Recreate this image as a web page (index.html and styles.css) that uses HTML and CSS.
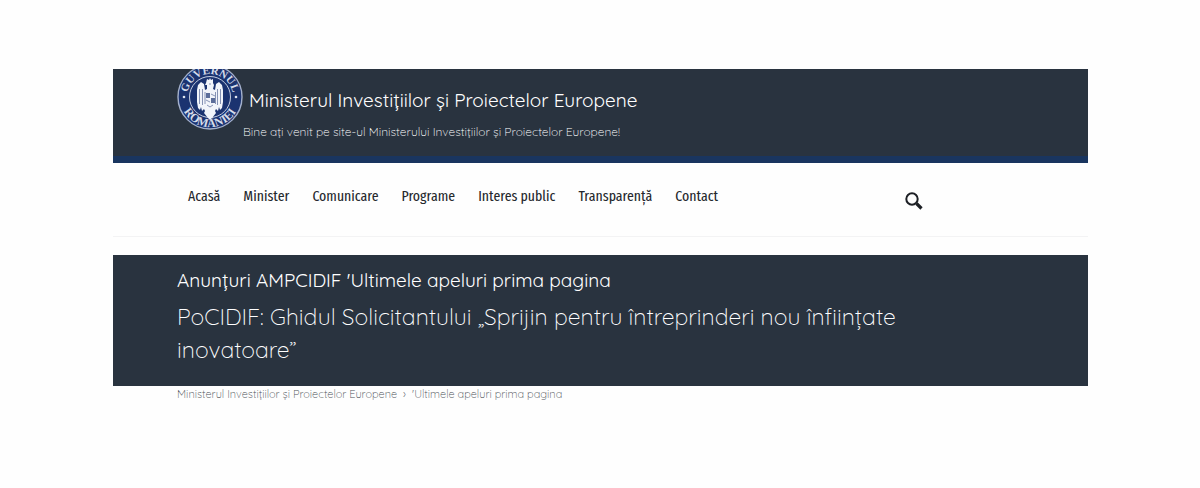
FILE: index.html
```
<!DOCTYPE html>
<html lang="ro">
<head>
    <meta charset="UTF-8">
    <meta name="viewport" content="width=device-width, initial-scale=1.0">
    <title>Ministerul Investițiilor și Proiectelor Europene</title>
    <link rel="stylesheet" href="styles.css">
</head>
<body>
    <header class="site-header">
        <svg class="emblem" viewBox="0 0 66 66" role="img" aria-label="Guvernul României">
            <defs>
                <path id="arc-top" d="M10 33a23 23 0 0 1 46 0"/>
                <path id="arc-bottom" d="M3 33a30 30 0 0 0 60 0"/>
            </defs>
            <circle cx="33" cy="33" r="32" fill="#1b3370" stroke="#a3b0cc" stroke-width="1.400"/>
            <circle cx="33" cy="33" r="20.500" fill="#1b3370" stroke="#c3cce0" stroke-width="1"/>
            <text class="emblem-text"><textPath href="#arc-top" startOffset="50%" text-anchor="middle">GUVERNUL</textPath></text>
            <text class="emblem-text emblem-text-bottom"><textPath href="#arc-bottom" startOffset="50%" text-anchor="middle">ROMÂNIEI</textPath></text>
            <circle cx="7" cy="33" r="1.300" fill="#dde3ef"/>
            <circle cx="59" cy="33" r="1.300" fill="#dde3ef"/>
            <!-- eagle -->
            <path fill="#f1f4fa" d="M30 15l2 1 1-2 1 2 2-1v4l1 2-1 4 2 1 1-6 3-2 3 3 1 5v12l-1 6-2 2-1-3-1 4-2-2-1 2 1 2-4 5-2 2-2-2-4-5 1-2-1-2-2 2-1-4-1 3-2-2-1-6V26l1-5 3-3 3 2 1 6 2-1v-4l-2 0 1-2z"/>
            <path fill="#1b3370" d="M29 29h4v5h-4zM34 34h4v5h-4z" opacity=".7"/>
            <path fill="none" stroke="#1b3370" stroke-width=".5" d="M22.500 25v15M25.500 25v16M43.500 25v15M40.500 25v16M34 30l4 2M29 36l4 2M28 28v12M38.500 28v12M30 41l3 2 3-2M32 20h2"/>
        </svg>
        <div class="site-name">
            <a class="site-title" href="#">Ministerul Investițiilor și Proiectelor Europene</a>
            <p class="tagline">Bine ați venit pe site-ul Ministerului Investițiilor și Proiectelor Europene!</p>
        </div>
    </header>

    <nav class="main-nav">
        <ul class="menu">
            <li><a href="#">Acasă</a></li>
            <li><a href="#">Minister</a></li>
            <li><a href="#">Comunicare</a></li>
            <li><a href="#">Programe</a></li>
            <li><a href="#">Interes public</a></li>
            <li><a href="#">Transparență</a></li>
            <li><a href="#">Contact</a></li>
        </ul>
        <button class="search" type="button" aria-label="Caută">
            <svg viewBox="0 0 18 18" width="18" height="18">
                <circle cx="7" cy="7" r="5.700" fill="none" stroke="#1d2025" stroke-width="2"/>
                <path d="M11.500 11.500l5 5" stroke="#1d2025" stroke-width="3.200"/>
            </svg>
        </button>
    </nav>

    <main>
        <section class="page-heading">
            <h2>Anunțuri AMPCIDIF 'Ultimele apeluri prima pagina</h2>
            <h1>PoCIDIF: Ghidul Solicitantului „Sprijin pentru întreprinderi nou înființate inovatoare”</h1>
        </section>
        <nav class="breadcrumbs" aria-label="Breadcrumb">
            <a href="#">Ministerul Investițiilor și Proiectelor Europene</a>
            <span>›</span>
            <a href="#">'Ultimele apeluri prima pagina</a>
        </nav>
    </main>
</body>
</html>
```

FILE: styles.css
```
* {
    box-sizing: border-box;
}

body {
    margin: 0;
    padding: 69px 112px 0 113px;
    background: #fefefe;
    font-family: Quicksand, Lato, sans-serif;
}

a {
    color: inherit;
    text-decoration: none;
}

.site-header {
    display: flex;
    padding: 0 64px 14px;
    color: #fff;
    background: #29333f;
    border-bottom: 7px solid #19355f;
}

.emblem {
    flex: none;
    width: 66px;
    height: 66px;
    margin-top: -5px;
    clip-path: inset(5px 0 0);
}

.emblem-text {
    font-family: "Liberation Serif", serif;
    font-size: 11px;
    font-weight: bold;
    fill: #d5dcea;
}

.emblem-text-bottom {
    font-size: 12px;
}

.site-name {
    padding-top: 18px;
}

.site-title {
    display: block;
    padding-left: 6px;
    font-size: 19px;
    font-weight: 400;
    line-height: 26px;
}

.tagline {
    margin: 8px 0 0;
    font-size: 12px;
    font-weight: 300;
    line-height: 21px;
}

.main-nav {
    display: flex;
    justify-content: space-between;
    padding: 22px 159px 21px 75px;
    border-bottom: 1px solid #f3f3f4;
}

.menu {
    display: flex;
    gap: 23px;
    margin: 0;
    padding: 0;
    list-style: none;
    color: #25282d;
    font-family: "Fira Sans Extra Condensed", "Liberation Sans Narrow", "Fira Sans Condensed", sans-serif;
    font-size: 15px;
    line-height: 23px;
    white-space: nowrap;
}

.search {
    width: 30px;
    height: 30px;
    padding: 7px 6px 5px;
    border: 0;
    background: none;
    cursor: pointer;
}

.search svg {
    display: block;
}

.page-heading {
    margin-top: 18px;
    padding: 8px 170px 20px 64px;
    color: #fff;
    background: #29333f;
}

.page-heading h1,
.page-heading h2 {
    margin: 0;
}

.page-heading h2 {
    margin-bottom: 2px;
    font-size: 19px;
    font-weight: 400;
    line-height: 35px;
}

.page-heading h1 {
    font-size: 23px;
    font-weight: 300;
    line-height: 33px;
}

.breadcrumbs {
    display: flex;
    gap: 6px;
    padding-left: 64px;
    color: #4c5157;
    font-size: 11px;
    font-weight: 300;
    line-height: 16px;
}
```
